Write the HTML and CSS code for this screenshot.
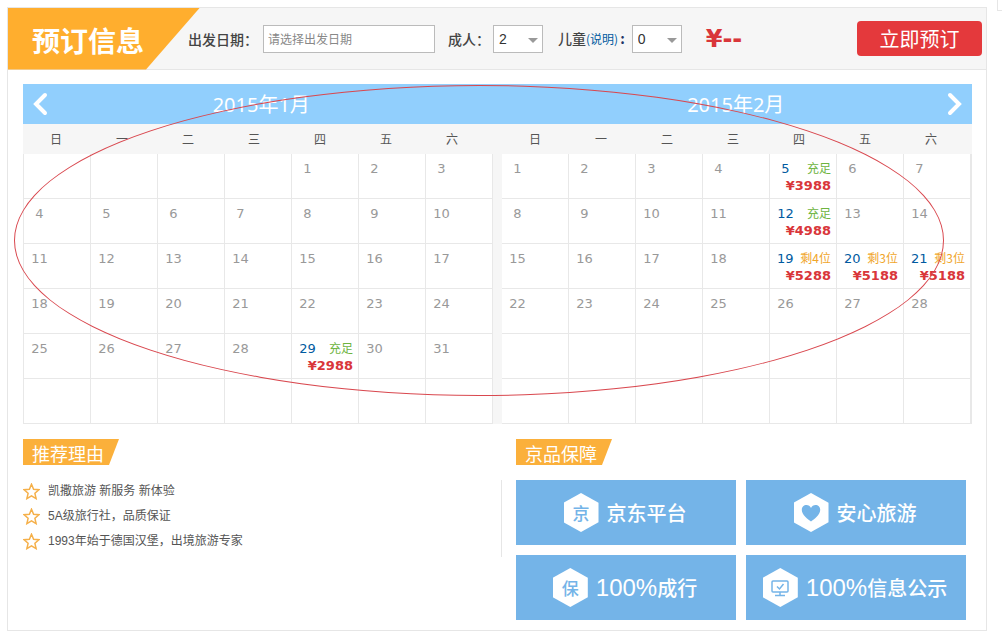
FILE: index.html
```html
<!DOCTYPE html>
<html lang="zh-CN">
<head>
<meta charset="utf-8">
<title>预订信息</title>
<link rel="stylesheet" href="styles.css">
</head>
<body>
<div class="page">
<main class="card">
  <form class="booking">
    <h1 class="booking-title">预订信息</h1>
    <label class="label label-date" for="date">出发日期：</label>
    <input class="date" id="date" type="text" placeholder="请选择出发日期">
    <label class="label" for="adults">成人：</label>
    <span class="picker"><select id="adults"><option>1</option><option selected>2</option></select></span>
    <span class="label"><label for="children">儿童</label><a class="note" href="#note">(说明)</a><b class="colon">:</b></span>
    <span class="picker"><select id="children"><option>0</option><option>1</option></select></span>
    <strong class="total">¥--</strong>
    <button class="submit" type="button">立即预订</button>
  </form>

  <section class="calendar">
    <div class="cal-head">
      <h2 class="cal-title">2015年1月</h2>
      <h2 class="cal-title">2015年2月</h2>
      <button class="nav nav-prev" type="button" aria-label="上个月"><svg width="16" height="24" viewBox="0 0 16 24"><path d="M13 3 4 12l9 9"/></svg></button>
      <button class="nav nav-next" type="button" aria-label="下个月"><svg width="16" height="24" viewBox="0 0 16 24"><path d="m3 3 9 9-9 9"/></svg></button>
    </div>
    <div class="months">
      <div class="month">
        <div class="week"><span>日</span><span>一</span><span>二</span><span>三</span><span>四</span><span>五</span><span>六</span></div>
        <table class="days first">
          <tr><td></td><td></td><td></td><td></td><td><i>1</i></td><td><i>2</i></td><td><i>3</i></td></tr>
          <tr><td><i>4</i></td><td><i>5</i></td><td><i>6</i></td><td><i>7</i></td><td><i>8</i></td><td><i>9</i></td><td><i>10</i></td></tr>
          <tr><td><i>11</i></td><td><i>12</i></td><td><i>13</i></td><td><i>14</i></td><td><i>15</i></td><td><i>16</i></td><td><i>17</i></td></tr>
          <tr><td><i>18</i></td><td><i>19</i></td><td><i>20</i></td><td><i>21</i></td><td><i>22</i></td><td><i>23</i></td><td><i>24</i></td></tr>
          <tr><td><i>25</i></td><td><i>26</i></td><td><i>27</i></td><td><i>28</i></td><td><div class="open"><i>29</i><span class="many">充足</span></div><b class="price">¥2988</b></td><td><i>30</i></td><td><i>31</i></td></tr>
          <tr><td></td><td></td><td></td><td></td><td></td><td></td><td></td></tr>
        </table>
      </div>
      <div class="month">
        <div class="week"><span>日</span><span>一</span><span>二</span><span>三</span><span>四</span><span>五</span><span>六</span></div>
        <table class="days">
          <tr><td><i>1</i></td><td><i>2</i></td><td><i>3</i></td><td><i>4</i></td><td><div class="open"><i>5</i><span class="many">充足</span></div><b class="price">¥3988</b></td><td><i>6</i></td><td><i>7</i></td></tr>
          <tr><td><i>8</i></td><td><i>9</i></td><td><i>10</i></td><td><i>11</i></td><td><div class="open"><i>12</i><span class="many">充足</span></div><b class="price">¥4988</b></td><td><i>13</i></td><td><i>14</i></td></tr>
          <tr><td><i>15</i></td><td><i>16</i></td><td><i>17</i></td><td><i>18</i></td><td><div class="open"><i>19</i><span class="few">剩4位</span></div><b class="price">¥5288</b></td><td><div class="open"><i>20</i><span class="few">剩3位</span></div><b class="price">¥5188</b></td><td><div class="open"><i>21</i><span class="few">剩3位</span></div><b class="price">¥5188</b></td></tr>
          <tr><td><i>22</i></td><td><i>23</i></td><td><i>24</i></td><td><i>25</i></td><td><i>26</i></td><td><i>27</i></td><td><i>28</i></td></tr>
          <tr><td></td><td></td><td></td><td></td><td></td><td></td><td></td></tr>
          <tr><td></td><td></td><td></td><td></td><td></td><td></td><td></td></tr>
        </table>
      </div>
    </div>
    <div class="marker"></div>
  </section>

  <div class="bottom">
    <section class="reasons">
      <h2 class="tag">推荐理由</h2>
      <ul class="reason-list">
        <li><svg class="star" viewBox="0 0 17 17"><path d="m8.5 1.2 2.1 5 5.3.5-4 3.6 1.2 5.3-4.6-2.8-4.6 2.8 1.2-5.3-4-3.6 5.3-.5z"/></svg>凯撒旅游 新服务 新体验</li>
        <li><svg class="star" viewBox="0 0 17 17"><path d="m8.5 1.2 2.1 5 5.3.5-4 3.6 1.2 5.3-4.6-2.8-4.6 2.8 1.2-5.3-4-3.6 5.3-.5z"/></svg>5A级旅行社，品质保证</li>
        <li><svg class="star" viewBox="0 0 17 17"><path d="m8.5 1.2 2.1 5 5.3.5-4 3.6 1.2 5.3-4.6-2.8-4.6 2.8 1.2-5.3-4-3.6 5.3-.5z"/></svg>1993年始于德国汉堡，出境旅游专家</li>
      </ul>
    </section>
    <section class="assurance">
      <h2 class="tag">京品保障</h2>
      <div class="tiles">
        <div class="tile"><span class="hex">京</span>京东平台</div>
        <div class="tile"><span class="hex"><svg width="20" height="18" viewBox="0 0 20 18"><path fill="#74b4e8" d="M10 17.5C7 15 .8 11 .8 5.9.8 2.8 3 1 5.4 1 7.500 1 9.200 2.200 10 4c.8-1.800 2.500-3 4.600-3C17 1 19.200 2.800 19.200 5.900 19.200 11 13 15 10 17.500z"/></svg></span>安心旅游</div>
        <div class="tile"><span class="hex">保</span><span><span class="num">100%</span>成行</span></div>
        <div class="tile"><span class="hex"><svg width="18" height="18" viewBox="0 0 18 18" fill="none" stroke="#74b4e8" stroke-width="1.5"><rect x="1" y="2" width="16" height="11" rx="1"/><path d="m6 7.500 2.500 2.500L12.500 5M9 13v3M4 16.500h10"/></svg></span><span><span class="num">100%</span>信息公示</span></div>
      </div>
    </section>
  </div>
</main>
<aside class="side"></aside>
</div>
</body>
</html>
```
FILE: styles.css
```css
* { box-sizing: border-box; }

body {
  margin: 0;
  background: #fff;
  color: #444;
  font: 12px "Liberation Sans", "Noto Sans CJK SC", sans-serif;
}

h1, h2, ul { margin: 0; padding: 0; font-weight: 400; }
i { font-style: normal; }
button { border: 0; cursor: pointer; }

.page { display: flex; align-items: flex-start; gap: 10px; overflow: hidden; }
.card { flex: 1; margin: 7px 0 8px 7px; border: 1px solid #e6e6e6; }
.side { width: 5px; height: 11px; border: 1px solid #e6e6e6; border-width: 0 0 1px 1px; }

.booking {
  display: flex;
  align-items: center;
  height: 62px;
  padding-right: 4px;
  background: #f6f6f6;
  border-bottom: 1px solid #e6e6e6;
}
.booking-title {
  width: 192px;
  height: 62px;
  margin-right: -12px;
  padding-left: 24px;
  background: #ffae2e;
  clip-path: polygon(0 0, 100% 0, 138px 100%, 0 100%);
  color: #fff;
  font: 700 28px/64px "Noto Sans CJK SC", sans-serif;
}
.label {
  margin-left: 13px;
  color: #444;
  font: 500 14px/28px "Noto Sans CJK SC", sans-serif;
  white-space: nowrap;
}
.label-date { margin-left: 0; }
.picker + .label { margin-left: 15px; }
.note { color: #005aa0; font-size: 12px; font-weight: 400; text-decoration: none; }
.colon { padding: 0 4px 0 2px; color: #236; }
.label label { font: inherit; }
.date {
  width: 172px;
  height: 28px;
  margin-left: 5px;
  padding: 0 4px;
  border: 1px solid #bbb;
  background: #fff;
  font: 12px "Noto Sans CJK SC", sans-serif;
}
.date::placeholder { color: #888; }
.picker { position: relative; margin-left: 3px; }
.picker::after {
  content: "";
  position: absolute;
  right: 5px;
  top: 13px;
  border: 5px solid transparent;
  border-top-color: #999;
  border-bottom: 0;
  pointer-events: none;
}
.picker select {
  display: block;
  width: 50px;
  height: 28px;
  padding: 0 5px;
  border: 1px solid #bbb;
  border-radius: 0;
  background: #fff;
  color: #333;
  appearance: none;
  font: 14px "Liberation Sans", sans-serif;
}
.total { margin-left: 24px; color: #d9363a; font: 700 24px/30px "DejaVu Sans", sans-serif; }
.submit {
  width: 125px;
  height: 35px;
  margin-left: auto;
  padding: 0;
  border-radius: 4px;
  background: #e4393c;
  color: #fff;
  font: 20px/35px "Noto Sans CJK SC", sans-serif;
}

.calendar { position: relative; margin: 14px 14px 0 15px; }
.cal-head { position: relative; display: flex; height: 40px; background: #91cffd; }
.cal-title {
  flex: 1;
  padding-left: 2px;
  color: #fff;
  text-align: center;
  font: 20px/42px "Noto Sans", "Noto Sans CJK SC", sans-serif;
}
.nav { position: absolute; top: 8px; height: 24px; padding: 0; background: none; }
.nav svg { display: block; fill: none; stroke: #fff; stroke-width: 4; stroke-linecap: round; }
.nav-prev { left: 9px; }
.nav-next { right: 9px; }

.months { display: flex; gap: 9px; background: #f6f6f6; }
.month { flex: 1; min-width: 0; }
.week {
  display: grid;
  grid-template-columns: repeat(7, 1fr);
  height: 30px;
  padding-right: 8px;
  color: #555;
  text-align: center;
  font: 12px/30px "Noto Sans CJK SC", sans-serif;
}
.days {
  width: 100%;
  table-layout: fixed;
  border-spacing: 0;
  border-right: 1px solid #e8e8e8;
  background: #fff;
  color: #999;
  font: 13px/17px "DejaVu Sans", "Noto Sans CJK SC", sans-serif;
}
.first { border-right: 0; border-left: 1px solid #e8e8e8; }
.days td {
  height: 45px;
  padding: 6px 5px 0 0;
  border: 1px solid #e8e8e8;
  border-width: 0 1px 1px 0;
  vertical-align: top;
}
.days i { display: inline-block; width: 31px; text-align: center; }
.open { display: flex; justify-content: space-between; height: 17px; white-space: nowrap; }
.open i { color: #005aa0; }
.open span { font: 12px/15px "Noto Sans CJK SC", sans-serif; }
.many { color: #6eb43f; }
.few { color: #f0a52a; }
.price { display: block; color: #d9363a; text-align: right; }

.marker {
  position: absolute;
  left: -9px;
  top: 1px;
  width: 98%;
  height: 311px;
  border: 1px solid #d9484f;
  border-radius: 50%;
  pointer-events: none;
}

.bottom { display: grid; grid-template-columns: 493fr 450fr; padding: 15px 20px 10px 15px; }
.tag {
  width: 96px;
  height: 26px;
  padding-left: 9px;
  background: #fbb03b;
  clip-path: polygon(0 0, 100% 0, 86px 100%, 0 100%);
  color: #fff;
  font: 18px/28px "Noto Sans CJK SC", sans-serif;
}
.reason-list {
  height: 77px;
  margin: 15px 14px 0 0;
  border-right: 1px solid #e6e6e6;
  list-style: none;
}
.reason-list li {
  display: flex;
  align-items: center;
  gap: 8px;
  height: 25px;
  padding-bottom: 2px;
  color: #555;
  line-height: 21px;
}
.star { width: 17px; height: 17px; fill: none; stroke: #f5b04a; stroke-width: 1.5; }
.tiles { display: grid; grid-template-columns: 1fr 1fr; gap: 10px; margin-top: 15px; }
.tile {
  display: flex;
  align-items: center;
  justify-content: center;
  gap: 8px;
  height: 65px;
  padding-right: 2px;
  background: #74b4e8;
  color: #fff;
  font: 500 20px/30px "Noto Sans CJK SC", sans-serif;
}
.num { font: 24px/30px "Liberation Sans", sans-serif; }
.hex {
  display: flex;
  align-items: center;
  justify-content: center;
  width: 35px;
  height: 39px;
  background: #fff;
  clip-path: polygon(50% 0, 100% 25%, 100% 75%, 50% 100%, 0 75%, 0 25%);
  color: #74b4e8;
  font-size: 17px;
}
```
